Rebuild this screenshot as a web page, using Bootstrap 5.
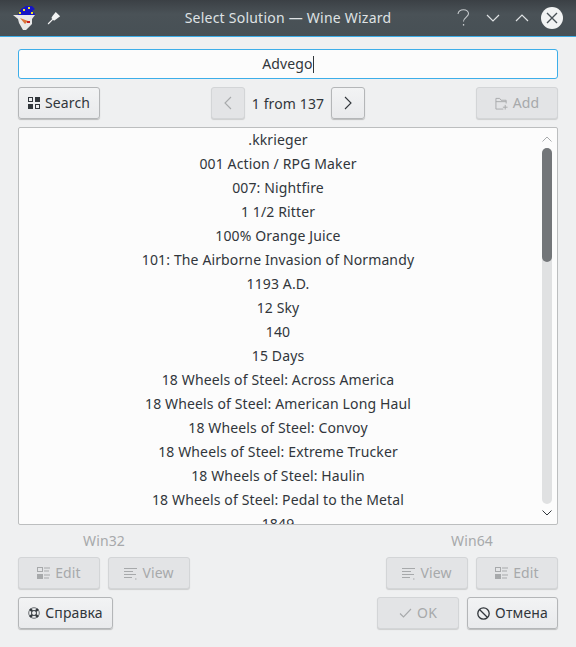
<!DOCTYPE html>
<html lang="en">
<head>
<meta charset="utf-8">
<title>Select Solution — Wine Wizard</title>
<link rel="stylesheet" href="https://cdn.jsdelivr.net/npm/bootstrap@5.3.0/dist/css/bootstrap.min.css">
<style>
html,body{height:100%;}
body{width:576px;height:647px;overflow:hidden;background:#eff0f1;font-family:"Noto Sans","Open Sans",sans-serif;font-size:14px;letter-spacing:.13px;color:#31363b;}
.tbar{height:37px;background:linear-gradient(#3b4045,#4a5257 14px,#475055);border-bottom:1px solid #3daee9;color:#dfe2e4;padding:0 13px 0 13px;position:relative;}
.ttl{position:absolute;left:0;right:0;top:0;height:36px;line-height:36px;text-align:center;font-size:14px;letter-spacing:.23px;}
.wbody{padding:12px 18px 0 18px;}
.srch{height:30px;background:#fcfcfc;border:1px solid #3daee9;border-radius:3px;text-align:center;line-height:28px;color:#31363b;}
.caret{display:inline-block;width:1px;height:17px;background:#31363b;vertical-align:-4px;}
.qb{height:32px;border:1px solid #b4b6b8;border-radius:3px;background:linear-gradient(#f2f3f4,#e9eaec);box-shadow:0 1px 1px rgba(0,0,0,.22);color:#31363b;font-size:14px;letter-spacing:.13px;padding:0;display:flex;align-items:center;justify-content:center;gap:5px;line-height:1;}
.qb:disabled{border-color:#d3d5d7;background:#e3e4e6;color:#a7a9ab;opacity:1;box-shadow:0 1px 1px rgba(0,0,0,.14);}
.w82{width:82px;}.w34{width:34px;}.w91{width:91px;}.w95{width:95px;}
.row1{margin-top:8px;height:32px;}
.pgr{gap:7px;}
.lst{margin-top:8px;height:398px;background:#fcfcfc;border:1px solid #bcbebf;border-radius:2px;overflow:hidden;position:relative;padding-right:20px;}
.itm{height:24px;line-height:24px;text-align:center;white-space:nowrap;}
.sbar{position:absolute;right:5px;top:0;bottom:0;width:10px;}
.trk{position:absolute;top:20px;height:356px;left:0;width:10px;border-radius:5px;background:#e0e1e2;}
.thm{position:absolute;top:20px;height:114px;left:0;width:10px;border-radius:5px;background:#737679;}
.arr{position:absolute;left:0;width:10px;height:6px;}
.arrt{top:8px;}
.arrb{top:382px;}
.plat{color:#a7a9ab;line-height:31px;}
.lblrow{height:32px;}
.lbl32{margin-left:65px;}
.lbl64{margin-right:65px;}
.platcol{width:172px;}
.gap8{gap:8px;}
.row2{height:32px;}
.row3{height:32px;margin-top:8px;}
.pin{margin-left:10px;}
.chev1{margin-left:16px;}
.chev2{margin-left:15px;}
.cls{margin-left:12px;}
</style>
</head>
<body>
<div class="tbar d-flex align-items-center">
  <svg class="flex-shrink-0" width="24" height="26" viewBox="0 0 24 26">
    <path d="M5 10 L8 4 L13 1 L19 1 L22 4 L19 6 L22 9 L22 10 Z" fill="#1616c4"/>
    <rect x="6" y="7" width="2" height="2" fill="#f0e020"/><rect x="10" y="4" width="2" height="2" fill="#f0e020"/><rect x="15" y="2" width="2" height="2" fill="#f0e020"/><rect x="18" y="7" width="2" height="2" fill="#f0e020"/>
    <path d="M0 10 L22 10 L19 14 L19 19 L13 25 L10 25 L6 18 L5 14 Z" fill="#e8e8e8"/>
    <path d="M7 13 L15 16 L12 19 Z" fill="#d9743a"/><rect x="14" y="16" width="3" height="2" fill="#c82020"/>
  </svg>
  <svg class="pin flex-shrink-0" width="14" height="14" viewBox="0 0 16 16"><path d="M10 1 L15 6 L10.500 9.500 L8 11 L5 8 L6.500 5.500 Z M6 9 L7 10 L2 15 L1 15 L1 14 Z" fill="#f2f3f3"/></svg>
  <div class="ttl">Select Solution — Wine Wizard</div>
  <div class="ms-auto d-flex align-items-center position-relative">
    <svg width="13" height="18" viewBox="0 0 13 18"><path d="M1 5 C1.500 2 4 .8 6.500 .8 C9.500 .8 11.500 2.500 11.500 4.800 C11.500 7.800 6.500 8.500 6.500 12.500" fill="none" stroke="#c7cbce" stroke-width="1.100"/><rect x="5.900" y="15" width="1.300" height="1.600" fill="#c7cbce"/></svg>
    <svg class="chev1" width="14" height="10" viewBox="0 0 14 10"><path d="M1 2 L7 8 L13 2" fill="none" stroke="#dfe2e4" stroke-width="1.200"/></svg>
    <svg class="chev2" width="14" height="10" viewBox="0 0 14 10"><path d="M1 8 L7 2 L13 8" fill="none" stroke="#dfe2e4" stroke-width="1.200"/></svg>
    <svg class="cls" width="22" height="22" viewBox="0 0 22 22"><circle cx="11" cy="11" r="11" fill="#f2f3f3"/><path d="M6 6 L16 16 M16 6 L6 16" stroke="#4a5257" stroke-width="1.400"/></svg>
  </div>
</div>
<div class="wbody">
  <div class="srch">Advego<span class="caret"></span></div>
  <div class="row1 d-flex justify-content-between align-items-start">
    <button class="btn qb w82" type="button">
      <svg width="12" height="12" viewBox="0 0 12 12"><rect x=".5" y=".5" width="4" height="4" fill="none" stroke="#31363b"/><rect x="7" y="0" width="5" height="5" fill="#31363b"/><rect x="0" y="7" width="5" height="5" fill="#31363b"/><rect x="7.500" y="7.500" width="4" height="4" fill="none" stroke="#31363b"/></svg>
      Search</button>
    <div class="d-flex align-items-center pgr">
      <button class="btn qb w34" type="button" disabled><svg width="10" height="14" viewBox="0 0 10 14"><path d="M8 1 L2 7 L8 13" fill="none" stroke="#a7a9ab" stroke-width="1.100"/></svg></button>
      <span>1 from 137</span>
      <button class="btn qb w34" type="button"><svg width="10" height="14" viewBox="0 0 10 14"><path d="M2 1 L8 7 L2 13" fill="none" stroke="#31363b" stroke-width="1.100"/></svg></button>
    </div>
    <button class="btn qb w82" type="button" disabled>
      <svg width="13" height="13" viewBox="0 0 14 14"><path d="M1 13 V1.500 H5 L6.500 3.500 H12 V7 M1 5 H12 M9 13 H1" fill="none" stroke="#a7a9ab"/><path d="M11 8.500 V13.500 M8.500 11 H13.500" stroke="#a7a9ab"/></svg>
      Add</button>
  </div>
  <div class="lst">
    <div class="itm">.kkrieger</div>
    <div class="itm">001 Action / RPG Maker</div>
    <div class="itm">007: Nightfire</div>
    <div class="itm">1 1/2 Ritter</div>
    <div class="itm">100% Orange Juice</div>
    <div class="itm">101: The Airborne Invasion of Normandy</div>
    <div class="itm">1193 A.D.</div>
    <div class="itm">12 Sky</div>
    <div class="itm">140</div>
    <div class="itm">15 Days</div>
    <div class="itm">18 Wheels of Steel: Across America</div>
    <div class="itm">18 Wheels of Steel: American Long Haul</div>
    <div class="itm">18 Wheels of Steel: Convoy</div>
    <div class="itm">18 Wheels of Steel: Extreme Trucker</div>
    <div class="itm">18 Wheels of Steel: Haulin</div>
    <div class="itm">18 Wheels of Steel: Pedal to the Metal</div>
    <div class="itm">1849</div>
    <div class="sbar">
      <svg class="arr arrt" viewBox="0 0 10 6"><path d="M.5 5.500 L5 1 L9.500 5.500" fill="none" stroke="#a8abad"/></svg>
      <div class="trk"></div><div class="thm"></div>
      <svg class="arr arrb" viewBox="0 0 10 6"><path d="M.5 .5 L5 5 L9.500 .5" fill="none" stroke="#31363b"/></svg>
    </div>
  </div>
  <div class="lblrow d-flex justify-content-between plat">
    <div class="platcol"><span class="lbl32">Win32</span></div>
    <div class="platcol text-end"><span class="lbl64">Win64</span></div>
  </div>
  <div class="row2 d-flex justify-content-between">
    <div class="d-flex gap8">
      <button class="btn qb w82" type="button" disabled><svg width="13" height="13" viewBox="0 0 13 13"><rect x=".5" y=".5" width="5" height="4" fill="none" stroke="#a7a9ab"/><rect x="0" y="7" width="6" height="5" fill="#a7a9ab"/><path d="M7 1 H13 M7 4 H12 M7 8 H13 M7 11 H12" stroke="#a7a9ab"/></svg>Edit</button>
      <button class="btn qb w82" type="button" disabled><svg width="13" height="13" viewBox="0 0 13 13"><path d="M0 1.500 H13 M0 4.500 H9 M0 7.500 H12 M0 10.500 H8 M11 12 H12.500" stroke="#a7a9ab"/></svg>View</button>
    </div>
    <div class="d-flex gap8">
      <button class="btn qb w82" type="button" disabled><svg width="13" height="13" viewBox="0 0 13 13"><path d="M0 1.500 H13 M0 4.500 H9 M0 7.500 H12 M0 10.500 H8 M11 12 H12.500" stroke="#a7a9ab"/></svg>View</button>
      <button class="btn qb w82" type="button" disabled><svg width="13" height="13" viewBox="0 0 13 13"><rect x=".5" y=".5" width="5" height="4" fill="none" stroke="#a7a9ab"/><rect x="0" y="7" width="6" height="5" fill="#a7a9ab"/><path d="M7 1 H13 M7 4 H12 M7 8 H13 M7 11 H12" stroke="#a7a9ab"/></svg>Edit</button>
    </div>
  </div>
  <div class="row3 d-flex justify-content-between">
    <button class="btn qb w95" type="button"><svg width="12" height="12" viewBox="0 0 12 12"><circle cx="6" cy="6" r="2.500" fill="none" stroke="#31363b"/><circle cx="6" cy="6" r="5.300" fill="none" stroke="#6a6e72"/><path d="M2 2 L4.200 4.200 M10 2 L7.800 4.200 M2 10 L4.200 7.800 M10 10 L7.800 7.800" stroke="#31363b" stroke-width="2.400"/></svg>Справка</button>
    <div class="d-flex gap8">
      <button class="btn qb w82" type="button" disabled><svg width="13" height="10" viewBox="0 0 13 10"><path d="M1 5.500 L4.500 9 L12 1" fill="none" stroke="#a7a9ab" stroke-width="1.100"/></svg>OK</button>
      <button class="btn qb w91" type="button"><svg width="13" height="13" viewBox="0 0 13 13"><circle cx="6.500" cy="6.500" r="5.700" fill="none" stroke="#31363b" stroke-width="1.300"/><path d="M2.500 2.500 L10.500 10.500" stroke="#31363b" stroke-width="1.300"/></svg>Отмена</button>
    </div>
  </div>
</div>
<script src="https://cdn.jsdelivr.net/npm/bootstrap@5.3.0/dist/js/bootstrap.bundle.min.js"></script>
</body>
</html>
